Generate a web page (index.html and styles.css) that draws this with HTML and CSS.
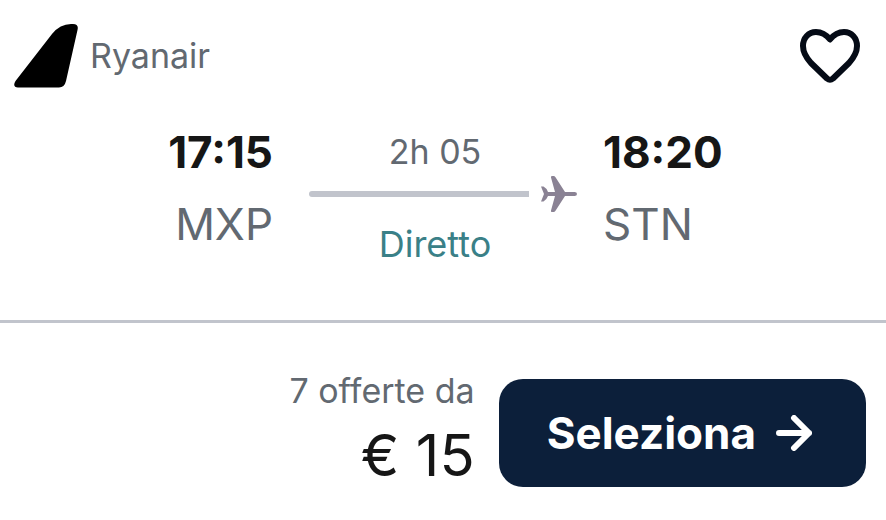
FILE: index.html
```html
<!DOCTYPE html>
<html lang="it">
<head>
    <meta charset="UTF-8">
    <meta name="viewport" content="width=device-width, initial-scale=1.0">
    <title>Milano - Londra</title>
    <link rel="stylesheet" href="styles.css">
</head>
<body>
    <article class="ticket">
        <header class="ticket-header">
            <div class="airline">
                <svg class="airline-logo" viewBox="0 0 64 64" aria-hidden="true">
                    <path d="M1.5 57 L38 10 Q46 0 57 0 H59 Q65 0 63.5 6 L52 57 Q50.500 63.500 45 63.500 H4 Q-2 63 1.500 57Z"/>
                </svg>
                <span>Ryanair</span>
            </div>
            <button class="save" type="button" aria-label="Salva">
                <svg viewBox="0 0 60 54" aria-hidden="true">
                    <path d="M30 10.500 C26 5.500 21 3 16 3 C8.500 3 3 9 3 17 C3 24 6.500 29 11 34 L27 49.500 Q30 52 33 49.500 L49 34 C53.500 29 57 24 57 17 C57 9 51.500 3 44 3 C39 3 34 5.500 30 10.500Z"/>
                </svg>
            </button>
        </header>

        <!-- Flight -->
        <div class="flight">
            <div class="stop departure">
                <time class="time">17:15</time>
                <span class="airport">MXP</span>
            </div>
            <div class="route">
                <span class="duration">2h 05</span>
                <div class="track">
                    <span class="line"></span>
                    <svg class="plane" viewBox="0 0 36 36" aria-hidden="true">
                        <path d="M10 1.500 Q9.500 0 11 0 H12.500 Q13.700 0 14.500 1.200 L24 16 H33.500 Q36 16 36 18 Q36 20 33.500 20 H24 L14.500 34.800 Q13.700 36 12.500 36 H11 Q9.500 36 10 34.500 L14 20 H7 Q5.500 24 2.500 25.500 L0 25.500 L3 18 L0 10.500 L2.500 10.500 Q5.500 12 7 16 H14Z"/>
                    </svg>
                </div>
                <span class="direct">Diretto</span>
            </div>
            <div class="stop">
                <time class="time">18:20</time>
                <span class="airport">STN</span>
            </div>
        </div>

        <!-- Price -->
        <footer class="ticket-footer">
            <div class="offer">
                <span class="offer-count">7 offerte da</span>
                <span class="price">€ 15</span>
            </div>
            <button class="select" type="button">
                Seleziona
                <svg class="arrow" viewBox="0 0 36 36" aria-hidden="true">
                    <path d="M3 18 H33 M18 3 L33 18 L18 33"/>
                </svg>
            </button>
        </footer>
    </article>
</body>
</html>
```
FILE: styles.css
```css
* {
    box-sizing: border-box;
}
body {
    margin: 0;
    background: #fff;
    color: #161616;
    font-family: Inter, "Liberation Sans", sans-serif;
    font-size: 34px;
    line-height: 44px;
}
button {
    border: 0;
    font-family: inherit;
    cursor: pointer;
}
svg {
    display: block;
}
.ticket-header {
    display: flex;
    align-items: center;
    justify-content: space-between;
    padding: 24px 26px 0 14px;
}
.airline {
    display: flex;
    align-items: center;
    gap: 12px;
    color: #626971;
}
.airline-logo {
    width: 64px;
    height: 64px;
}
.save {
    padding: 0;
    background: none;
}
.save svg {
    width: 60px;
    height: 54px;
    fill: none;
    stroke: #050b16;
    stroke-width: 6;
    stroke-linejoin: round;
}
.flight {
    display: grid;
    grid-template-columns: 1fr 268px 1fr;
    padding: 40px 0 52px;
}
.stop {
    display: flex;
    flex-direction: column;
    padding: 0 36px 0 26px;
    font-size: 44px;
    line-height: 48px;
    gap: 24px;
}
.departure {
    align-items: flex-end;
}
.time {
    font-weight: 700;
}
.airport {
    color: #626971;
}
.route {
    display: flex;
    flex-direction: column;
    line-height: 48px;
    text-align: center;
}
.duration,
.direct {
    padding-right: 16px;
}
.duration {
    color: #626971;
}
.direct {
    padding-top: 8px;
    color: #3a8087;
    font-size: 36px;
}
.track {
    display: flex;
    align-items: center;
    gap: 12px;
}
.line {
    flex: 1;
    height: 6px;
    border-radius: 3px 0 0 3px;
    background: #c1c4cc;
}
.plane {
    width: 36px;
    height: 36px;
    fill: #8a8294;
}
.ticket-footer {
    display: flex;
    align-items: center;
    justify-content: flex-end;
    gap: 24px;
    padding: 46px 20px 20px;
    border-top: 3px solid #c1c4cc;
}
.offer {
    display: flex;
    flex-direction: column;
    text-align: right;
}
.offer-count {
    color: #626971;
}
.price {
    font-size: 58px;
    line-height: 84px;
}
.select {
    display: flex;
    align-items: center;
    gap: 20px;
    padding: 30px 54px 30px 48px;
    border-radius: 24px;
    background: #0c1f3a;
    color: #fff;
    font-size: 44px;
    font-weight: 700;
    line-height: 48px;
}
.arrow {
    width: 36px;
    height: 36px;
    fill: none;
    stroke: #fff;
    stroke-width: 6;
    stroke-linecap: round;
    stroke-linejoin: round;
}
```
